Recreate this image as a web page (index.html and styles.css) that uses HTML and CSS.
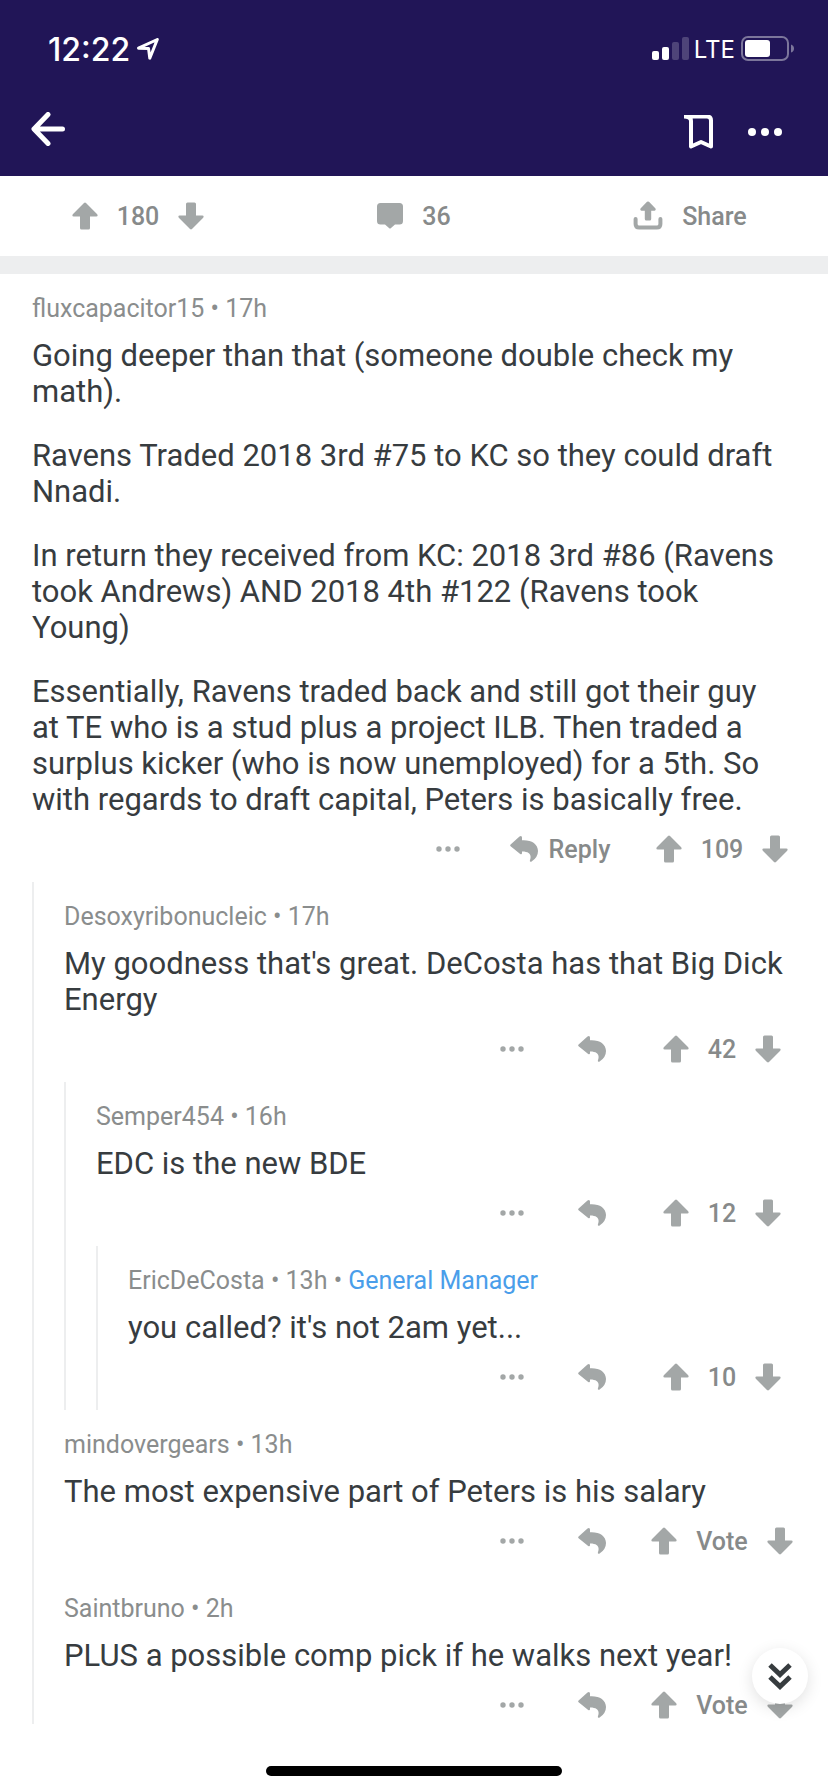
FILE: index.html
```html
<!DOCTYPE html>
<html lang="en">
<head>
<meta charset="utf-8">
<meta name="viewport" content="width=device-width, initial-scale=1">
<title>Comments</title>
<link rel="stylesheet" href="styles.css">
</head>
<body>
<svg class="sprite" aria-hidden="true">
  <symbol id="up" viewBox="0 0 26 28"><path d="M12 .9Q13 0 14 .9L25.200 12.300Q26.400 14.300 24.300 14.600H18V26Q18 27.500 16.500 27.500H9.500Q8 27.500 8 26V14.600H1.700Q-.4 14.300 .8 12.300Z"/></symbol>
  <symbol id="down" viewBox="0 0 26 28"><path d="M12 27.100Q13 28 14 27.100L25.200 15.700Q26.400 13.700 24.300 13.400H18V2Q18 .5 16.500 .5H9.500Q8 .5 8 2V13.400H1.700Q-.4 13.700 .8 15.700Z"/></symbol>
  <symbol id="reply" viewBox="0 0 28 28"><path d="M9.500 1.400Q12 .2 12 2.600V5.200C21 4.600 28 8.600 28 16Q28 22.600 21.300 26.700Q19.500 27.200 19.900 25.500C22 20 19.500 16.500 12 16.600V18.300Q11.800 19.900 10.200 19L.6 11.200Q-.3 10.300 .6 9.400Z"/></symbol>
  <symbol id="dots" viewBox="0 0 24 6"><circle cx="3" cy="3" r="2.700"/><circle cx="12" cy="3" r="2.700"/><circle cx="21" cy="3" r="2.700"/></symbol>
</svg>

<header class="header">
  <div class="status">
    <div class="status-side">
      <span class="time">12:22</span>
      <svg class="locate" viewBox="0 0 22 22"><path d="M1.500 10.200 20.300 1.500 12.800 20.200 11.500 10.400Z"/></svg>
    </div>
    <div class="status-side">
      <svg class="signal" viewBox="0 0 38 24"><rect x="0" y="14" width="7" height="9" rx="2"/><rect x="10" y="10" width="7" height="13" rx="2"/><g opacity=".2"><rect x="20" y="5" width="7" height="18" rx="2"/><rect x="30" y="0" width="7" height="23" rx="2"/></g></svg>
      <span class="network">LTE</span>
      <svg class="battery" viewBox="0 0 54 26"><rect x="1" y="1" width="46" height="23" rx="6" fill="none" stroke="#7c769b" stroke-width="2"/><rect x="4" y="4" width="25" height="17" rx="3"/><path d="M50 8.500Q53 9.500 53 12.500T50 16.500Z" fill="#7c769b"/></svg>
    </div>
  </div>
  <nav class="nav">
    <button class="icon-button" aria-label="Back"><svg class="back" viewBox="0 0 34 34"><path d="M17 2.500 3 17 17 31.500M3.500 17H31.500"/></svg></button>
    <div class="nav-actions">
      <button class="icon-button" aria-label="Save"><svg class="bookmark" viewBox="0 0 30 34"><path d="M1 1.500H24Q28 1.500 28 5.500V31.500L18 27 8 31.500V6Q8 1.500 1 1.500"/></svg></button>
      <button class="icon-button" aria-label="More"><svg class="more" viewBox="0 0 36 10"><circle cx="5" cy="5" r="4"/><circle cx="18" cy="5" r="4"/><circle cx="31" cy="5" r="4"/></svg></button>
    </div>
  </nav>
</header>

<section class="post-bar" aria-label="Post actions">
  <div class="post-cell">
    <button class="icon-button" aria-label="Upvote"><svg class="arrow"><use href="#up"/></svg></button>
    <span>180</span>
    <button class="icon-button" aria-label="Downvote"><svg class="arrow"><use href="#down"/></svg></button>
  </div>
  <button class="post-cell icon-button" aria-label="36 comments">
    <svg class="bubble" viewBox="0 0 26 26"><path d="M3.500 0H22.500Q26 0 26 3.500V18Q26 21.500 22.500 21.500H18L14 25Q13 26 12 25L8 21.500H3.500Q0 21.500 0 18V3.500Q0 0 3.500 0Z"/></svg>
    <span>36</span>
  </button>
  <button class="post-cell icon-button">
    <svg class="share" viewBox="0 0 30 30"><path d="M14 .8Q15 0 16 .8L22.500 7.500Q23.400 9.500 21.600 9.700H18.200V18Q18.200 19.500 16.700 19.500H13.300Q11.800 19.500 11.800 18V9.700H8.400Q6.600 9.500 7.500 7.500Z"/><path d="M2.600 18V23Q2.600 26.500 6.200 26.500H23.800Q27.400 26.500 27.400 23V18" fill="none" stroke="#a3a7a7" stroke-width="4" stroke-linecap="round"/></svg>
    <span>Share</span>
  </button>
</section>

<main class="thread">
  <article class="comment">
    <p class="meta">fluxcapacitor15 • 17h</p>
    <div class="body">
      <p>Going deeper than that (someone double check my math).</p>
      <p>Ravens Traded 2018 3rd #75 to KC so they could draft Nnadi.</p>
      <p>In return they received from KC: 2018 3rd #86 (Ravens took Andrews) AND 2018 4th #122 (Ravens took Young)</p>
      <p>Essentially, Ravens traded back and still got their guy at TE who is a stud plus a project ILB. Then traded a surplus kicker (who is now unemployed) for a 5th. So with regards to draft capital, Peters is basically free.</p>
    </div>
    <div class="actions">
      <button class="icon-button overflow" aria-label="More"><svg class="dots"><use href="#dots"/></svg></button>
      <button class="icon-button reply reply-labelled"><svg class="reply-icon"><use href="#reply"/></svg><span>Reply</span></button>
      <div class="votes"><button class="icon-button" aria-label="Upvote"><svg class="arrow"><use href="#up"/></svg></button><span>109</span><button class="icon-button" aria-label="Downvote"><svg class="arrow"><use href="#down"/></svg></button></div>
    </div>
  </article>

  <div class="replies">
    <article class="comment">
      <p class="meta">Desoxyribonucleic • 17h</p>
      <div class="body"><p>My goodness that's great. DeCosta has that Big Dick Energy</p></div>
      <div class="actions">
        <button class="icon-button overflow" aria-label="More"><svg class="dots"><use href="#dots"/></svg></button>
        <button class="icon-button reply" aria-label="Reply"><svg class="reply-icon"><use href="#reply"/></svg></button>
        <div class="votes"><button class="icon-button" aria-label="Upvote"><svg class="arrow"><use href="#up"/></svg></button><span>42</span><button class="icon-button" aria-label="Downvote"><svg class="arrow"><use href="#down"/></svg></button></div>
      </div>
    </article>

    <div class="replies">
      <article class="comment">
        <p class="meta">Semper454 • 16h</p>
        <div class="body"><p>EDC is the new BDE</p></div>
        <div class="actions">
          <button class="icon-button overflow" aria-label="More"><svg class="dots"><use href="#dots"/></svg></button>
          <button class="icon-button reply" aria-label="Reply"><svg class="reply-icon"><use href="#reply"/></svg></button>
          <div class="votes"><button class="icon-button" aria-label="Upvote"><svg class="arrow"><use href="#up"/></svg></button><span>12</span><button class="icon-button" aria-label="Downvote"><svg class="arrow"><use href="#down"/></svg></button></div>
        </div>
      </article>

      <div class="replies">
        <article class="comment">
          <p class="meta">EricDeCosta • 13h • <span class="flair">General Manager</span></p>
          <div class="body"><p>you called? it's not 2am yet...</p></div>
          <div class="actions">
            <button class="icon-button overflow" aria-label="More"><svg class="dots"><use href="#dots"/></svg></button>
            <button class="icon-button reply" aria-label="Reply"><svg class="reply-icon"><use href="#reply"/></svg></button>
            <div class="votes"><button class="icon-button" aria-label="Upvote"><svg class="arrow"><use href="#up"/></svg></button><span>10</span><button class="icon-button" aria-label="Downvote"><svg class="arrow"><use href="#down"/></svg></button></div>
          </div>
        </article>
      </div>
    </div>

    <article class="comment">
      <p class="meta">mindovergears • 13h</p>
      <div class="body"><p>The most expensive part of Peters is his salary</p></div>
      <div class="actions">
        <button class="icon-button overflow" aria-label="More"><svg class="dots"><use href="#dots"/></svg></button>
        <button class="icon-button reply" aria-label="Reply"><svg class="reply-icon"><use href="#reply"/></svg></button>
        <div class="votes"><button class="icon-button" aria-label="Upvote"><svg class="arrow"><use href="#up"/></svg></button><span>Vote</span><button class="icon-button" aria-label="Downvote"><svg class="arrow"><use href="#down"/></svg></button></div>
      </div>
    </article>

    <article class="comment comment-last">
      <p class="meta">Saintbruno • 2h</p>
      <div class="body"><p>PLUS a possible comp pick if he walks next year!</p></div>
      <div class="actions">
        <button class="icon-button overflow" aria-label="More"><svg class="dots"><use href="#dots"/></svg></button>
        <button class="icon-button reply" aria-label="Reply"><svg class="reply-icon"><use href="#reply"/></svg></button>
        <div class="votes"><button class="icon-button" aria-label="Upvote"><svg class="arrow"><use href="#up"/></svg></button><span>Vote</span><button class="icon-button" aria-label="Downvote"><svg class="arrow"><use href="#down"/></svg></button></div>
      </div>
    </article>
  </div>
</main>

<button class="jump" aria-label="Next comment"><svg class="chevrons" viewBox="0 0 24 28"><path d="M2 3 12 12.500 22 3M2 15 12 24.500 22 15"/></svg></button>
<div class="home-indicator"></div>
</body>
</html>
```
FILE: styles.css
```css
* {
  box-sizing: border-box;
}

body {
  margin: 0;
  min-height: 100vh;
  background: #fff;
  color: #373c3f;
  font-family: Roboto, "Liberation Sans", sans-serif;
}

p {
  margin: 0;
}

svg {
  display: block;
  fill: currentColor;
}

.sprite {
  position: absolute;
  width: 0;
  height: 0;
}

.icon-button {
  margin: 0;
  padding: 0;
  border: 0;
  background: none;
  color: inherit;
  font: inherit;
  cursor: pointer;
}

/* Header */
.header {
  height: 176px;
  background: #211557;
  color: #fff;
}

.status {
  display: flex;
  justify-content: space-between;
  height: 98px;
  padding: 0 33px 0 48px;
  font-family: Inter, "Liberation Sans", sans-serif;
}

.status-side {
  display: flex;
  align-items: center;
}

.time {
  font-size: 32px;
  font-weight: 500;
}

.locate {
  width: 22px;
  height: 22px;
  margin-left: 7px;
  fill: none;
  stroke: #fff;
  stroke-width: 3;
  stroke-linejoin: round;
}

.signal {
  width: 38px;
  height: 24px;
}

.network {
  margin: 0 6px 0 4px;
  font-size: 24px;
  font-weight: 400;
}

.battery {
  width: 54px;
  height: 26px;
}

.nav {
  display: flex;
  justify-content: space-between;
  align-items: center;
  height: 62px;
  padding: 0 45px 0 31px;
}

.nav-actions {
  display: flex;
  align-items: center;
  gap: 34px;
  padding-top: 6px;
}

.back {
  width: 34px;
  height: 34px;
  fill: none;
  stroke: #fff;
  stroke-width: 5;
  stroke-linecap: round;
  stroke-linejoin: round;
}

.bookmark {
  width: 30px;
  height: 34px;
  fill: none;
  stroke: #fff;
  stroke-width: 4;
  stroke-linejoin: round;
}

.more {
  width: 36px;
  height: 10px;
}

/* Post actions */
.post-bar {
  display: grid;
  grid-template-columns: repeat(3, 1fr);
  height: 98px;
  border-bottom: 18px solid #edeeef;
}

.post-bar,
.actions {
  color: #878a8a;
  font-size: 25px;
  font-weight: 500;
}

.post-bar svg,
.actions svg {
  color: #a3a7a7;
}

.post-cell,
.votes {
  display: flex;
  justify-content: center;
  align-items: center;
  gap: 19px;
}

.arrow {
  width: 26px;
  height: 28px;
}

.bubble {
  width: 26px;
  height: 26px;
}

.share {
  width: 30px;
  height: 30px;
}

/* Comments */
.comment {
  padding: 20px 24px 16px 32px;
}

.meta {
  color: #8a8d8d;
  font-size: 25px;
  line-height: 30px;
}

.flair {
  color: #4a9eea;
}

.body {
  display: grid;
  gap: 28px;
  padding: 14px 16px 14px 0;
  font-size: 31px;
  line-height: 36px;
}

.actions {
  display: flex;
  justify-content: flex-end;
  height: 34px;
}

.overflow,
.reply {
  display: flex;
  justify-content: center;
  align-items: center;
}

.overflow {
  width: 64px;
}

.reply {
  gap: 11px;
  width: 96px;
}

.reply-labelled {
  width: 160px;
}

.votes {
  width: 164px;
}

.dots {
  width: 24px;
  height: 6px;
}

.reply-icon {
  width: 28px;
  height: 28px;
}

.replies {
  margin-left: 32px;
  border-left: 2px solid #edeeef;
}

.replies > .comment {
  padding-left: 30px;
}

.replies > .replies {
  margin-left: 30px;
}

.replies > .comment-last {
  padding-bottom: 2px;
}

/* Floating controls */
.jump {
  position: fixed;
  right: 20px;
  bottom: 88px;
  display: grid;
  place-items: center;
  width: 56px;
  height: 56px;
  padding: 0;
  border: 0;
  border-radius: 50%;
  background: #fff;
  box-shadow: 0 4px 16px rgba(0, 0, 0, 0.12);
  cursor: pointer;
}

.chevrons {
  width: 24px;
  height: 28px;
  fill: none;
  stroke: #373c3f;
  stroke-width: 5;
}

.home-indicator {
  position: fixed;
  bottom: 16px;
  left: 50%;
  width: 296px;
  height: 10px;
  border-radius: 5px;
  background: #000;
  transform: translateX(-50%);
}
```
